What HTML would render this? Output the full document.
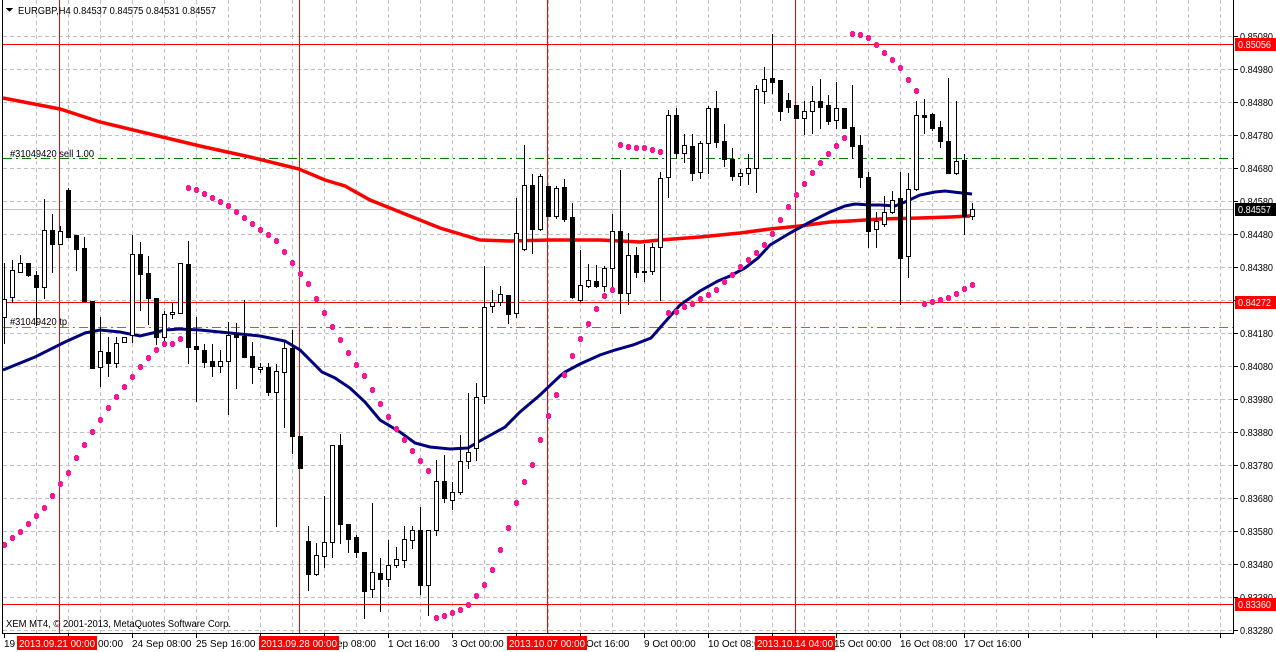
<!DOCTYPE html>
<html><head><meta charset="utf-8"><style>
html,body{margin:0;padding:0;background:#fff;width:1276px;height:652px;overflow:hidden}
svg{display:block}
text{font-family:"Liberation Sans",sans-serif;font-size:10px}
</style></head><body>
<svg id="s" width="1276" height="652" xmlns="http://www.w3.org/2000/svg" shape-rendering="crispEdges">
<rect width="1276" height="652" fill="#fff"/>
<g id="grid" stroke="#c0c0c0" stroke-width="1" stroke-dasharray="4,3"></g>
<g id="lines"></g>
<g id="ma" shape-rendering="auto"></g>
<g id="cand"></g>
<g id="sar" fill="#ff1493"></g>
<g id="axis"></g>
<g id="txt" fill="#000">
<text x="18" y="14" textLength="198" lengthAdjust="spacingAndGlyphs">EURGBP,H4  0.84537 0.84575 0.84531 0.84557</text>
<text x="10" y="157" textLength="84" lengthAdjust="spacingAndGlyphs">#31049420 sell 1.00</text>
<text x="10" y="325" textLength="57" lengthAdjust="spacingAndGlyphs">#31049420 tp</text>
<text x="6" y="627" textLength="225" lengthAdjust="spacingAndGlyphs">XEM MT4, © 2001-2013, MetaQuotes Software Corp.</text>
</g>
<polygon points="6,8 13,8 9.5,12" fill="#000"/>
</svg>
<script>
var NS="http://www.w3.org/2000/svg";
function el(p,t,a,txt){var e=document.createElementNS(NS,t);for(var k in a)e.setAttribute(k,a[k]);if(txt!=null)e.textContent=txt;document.getElementById(p).appendChild(e);return e;}
for(var k=0;k<19;k++){var y=36+33*k+0.5;el('grid','line',{x1:3,x2:1233,y1:y,y2:y});}
for(var x=36;x<1233;x+=32){el('grid','line',{x1:x+0.5,x2:x+0.5,y1:0,y2:633});}
el('lines','line',{x1:3,x2:1233,y1:209.5,y2:209.5,stroke:'#c0c0c0'});
el('lines','line',{x1:3,x2:1233,y1:158.5,y2:158.5,stroke:'#008000','stroke-dasharray':'9,4,2,4'});
el('lines','line',{x1:3,x2:1233,y1:327.5,y2:327.5,stroke:'#ff4500','stroke-dasharray':'9,4,2,4'});
[44,302,604].forEach(function(y){el('lines','line',{x1:3,x2:1233,y1:y+0.5,y2:y+0.5,stroke:'#ff0000'});});
[59,299,547,795].forEach(function(x){el('lines','line',{x1:x+0.5,x2:x+0.5,y1:0,y2:633,stroke:'#ff0000'});});
var red=[[3,98],[60,109],[100,122],[150,134],[200,146],[250,157],[299,169],[325,180],[345,186],[370,200],[390,208],[420,220],[440,228],[460,234],[480,240],[510,241],[550,240],[600,240],[640,242],[660,240],[700,237],[740,233],[770,229],[800,226],[830,222],[850,221],[880,219],[920,218],[950,217],[970,216]];
var blue=[[3,370],[35,357],[65,342],[85,333],[100,330],[120,332],[140,336],[165,330],[180,329],[200,330],[220,332],[240,334],[260,336],[285,341],[300,350],[322,372],[335,378],[350,388],[365,402],[380,420],[400,432],[415,443],[430,447],[450,449],[468,448],[478,442],[505,427],[520,412],[540,395],[560,376],[565,372],[580,364],[600,355],[615,350],[633,345],[651,338],[665,322],[680,305],[700,291],[718,281],[730,276],[745,268],[758,258],[770,245],[790,233],[810,222],[830,212],[845,206],[855,204],[870,205],[880,205],[895,206],[905,202],[920,195],[935,192],[945,191],[962,193],[972,194]];
function pl(a){return a.map(function(p){return p.join(',')}).join(' ');}
el('ma','polyline',{points:pl(red),fill:'none',stroke:'#ff0000','stroke-width':3.5});
el('ma','polyline',{points:pl(blue),fill:'none',stroke:'#000080','stroke-width':3});
var C=[['w',299,317,263,343],['w',270,297,260,302],['w',263,272,255,272],['b',263,275,263,276],['b',275,287,271,325],['w',230,287,199,298],['b',230,244,214,272],['w',231,244,226,244],['b',190,237,188,237],['b',235,249,235,270],['b',248,301,237,301],['b',301,368,301,368],['w',351,367,317,386],['b',352,363,337,376],['w',343,363,337,367],['w',337,342,337,342],['w',254,335,235,342],['b',254,274,242,310],['b',273,298,256,324],['b',298,337,298,344],['w',314,337,311,340],['w',312,314,303,318],['w',263,313,263,313],['b',264,347,241,363],['b',346,349,317,401],['b',350,362,344,367],['b',361,366,344,376],['w',361,366,350,372],['w',335,361,322,414],['b',334,337,323,388],['b',336,357,300,357],['b',356,367,342,383],['w',367,369,363,372],['b',367,392,363,395],['w',371,392,364,526],['w',348,372,342,427],['b',348,436,330,453],['b',436,468,436,468],['b',541,574,526,590],['w',555,574,543,575],['w',542,556,496,567],['w',445,542,445,557],['b',445,524,434,543],['b',524,539,524,552],['b',537,552,535,557],['b',552,591,552,618],['w',572,589,503,597],['b',573,579,558,611],['w',565,579,540,586],['w',559,565,547,567],['w',539,560,526,567],['w',530,540,526,548],['b',530,585,507,594],['w',530,585,530,615],['w',481,530,460,535],['b',481,498,455,502],['w',492,500,482,509],['w',461,492,435,494],['w',452,461,393,468],['w',397,448,383,460],['w',307,396,266,403],['w',302,306,290,312],['w',294,302,286,305],['b',295,314,295,323],['w',233,313,198,317],['w',185,249,145,250],['b',185,229,174,253],['w',176,229,174,230],['b',186,216,186,216],['w',188,216,186,218],['b',187,219,179,221],['b',217,297,203,298],['w',285,300,250,301],['w',280,286,264,287],['b',281,286,265,287],['w',268,286,266,291],['w',231,268,214,290],['b',231,293,170,313],['w',255,293,233,304],['b',255,272,247,277],['b',271,272,244,281],['w',247,271,243,274],['w',178,247,172,300],['w',115,177,110,197],['b',115,153,108,158],['w',145,153,134,162],['b',146,173,134,180],['w',143,172,141,178],['w',108,143,106,173],['b',108,142,91,147],['b',141,159,124,166],['b',159,176,148,180],['w',173,176,169,185],['w',168,173,154,184],['w',89,168,85,192],['w',79,91,67,103],['b',78,82,34,93],['b',80,111,80,120],['b',100,107,93,112],['b',105,118,105,118],['w',111,118,101,134],['w',101,111,86,133],['b',101,107,79,128],['b',105,121,95,124],['w',108,120,82,128],['b',108,128,108,128],['b',127,146,85,158],['b',145,177,135,187],['b',177,231,172,247],['w',221,229,212,247],['w',212,224,196,226],['w',200,212,191,213],['b',198,258,172,304],['w',189,256,173,277],['w',115,189,101,190],['b',115,117,99,133],['b',114,128,113,130],['b',127,141,121,147],['b',141,173,78,173],['w',161,173,101,174],['b',160,216,154,234],['w',209,216,203,219]];
C.forEach(function(c,i){var cx=4+8*i;
 el('cand','line',{x1:cx+0.5,x2:cx+0.5,y1:c[3],y2:c[4]+1,stroke:'#000'});
 var h=Math.max(1,c[2]-c[1]);
 if(c[0]=='b')el('cand','rect',{x:cx-2,y:c[1],width:5,height:h+1,fill:'#000'});
 else el('cand','rect',{x:cx-1.5,y:c[1]+0.5,width:4,height:h,fill:'#fff',stroke:'#000'});
});
var S=[545,538,532,524,516,508,496,484,473,458,445,432,420,408,397,387,377,367,358,350,344,344,339,
188,190,194,198,202,206,212,218,224,230,235,241,252,263,274,284,299,313,327,340,353,365,376,390,404,417,429,440,451,461,471,
618,616,613,610,605,596,585,570,550,528,503,482,465,440,416,395,375,356,339,324,309,296,290,
145,147,148,148,150,152,
313,312,307,304,299,295,290,282,275,267,260,253,245,234,220,207,195,184,173,163,154,146,138,
34,35,38,45,53,60,68,80,91,
304,302,300,298,294,289,285];
S.forEach(function(y,i){var cx=4+8*i;el('sar','rect',{x:cx-2,y:y-2,width:5,height:4});el('sar','rect',{x:cx-1,y:y-3,width:3,height:6});});
el('axis','line',{x1:2.5,x2:2.5,y1:0,y2:634,stroke:'#000'});
el('axis','line',{x1:1233.5,x2:1233.5,y1:0,y2:634,stroke:'#000'});
el('axis','line',{x1:2,x2:1234,y1:633.5,y2:633.5,stroke:'#000'});
var P=['0.85080','0.84980','0.84880','0.84780','0.84680','0.84580','0.84480','0.84380','0.84280','0.84180','0.84080','0.83980','0.83880','0.83780','0.83680','0.83580','0.83480','0.83380','0.83280'];
P.forEach(function(p,k){var y=36+33*k;el('axis','line',{x1:1234,x2:1238,y1:y+0.5,y2:y+0.5,stroke:'#000'});el('axis','text',{x:1240,y:y+4,textLength:33,lengthAdjust:'spacingAndGlyphs'},p);});
function box(y,txt,col){el('axis','rect',{x:1235,y:y-6,width:41,height:13,fill:col});el('axis','text',{x:1238,y:y+4,fill:'#fff',textLength:33,lengthAdjust:'spacingAndGlyphs'},txt);}
box(44,'0.85056','#ff0000');box(209,'0.84557','#000');box(302,'0.84272','#ff0000');box(604,'0.83360','#ff0000');
for(var x=4;x<1233;x+=64){el('axis','line',{x1:x+0.5,x2:x+0.5,y1:634,y2:638,stroke:'#000'});}
[[4,'19 S'],[98,'00:00'],[132,'24 Sep 08:00'],[196,'25 Sep 16:00'],[337,'ep 08:00'],[388,'1 Oct 16:00'],[452,'3 Oct 00:00'],[586,'Oct 16:00'],[644,'9 Oct 00:00'],[708,'10 Oct 08:0'],[834,'15 Oct 00:00'],[900,'16 Oct 08:00'],[964,'17 Oct 16:00']].forEach(function(a){el('axis','text',{x:a[0],y:647},a[1]);});
[[17,'2013.09.21 00:00'],[259,'2013.09.28 00:00'],[507,'2013.10.07 00:00'],[755,'2013.10.14 04:00']].forEach(function(a){el('axis','rect',{x:a[0],y:636,width:80,height:14,fill:'#ff0000'});el('axis','text',{x:a[0]+2,y:647,fill:'#fff',textLength:76,lengthAdjust:'spacingAndGlyphs'},a[1]);});
</script>
</body></html>
